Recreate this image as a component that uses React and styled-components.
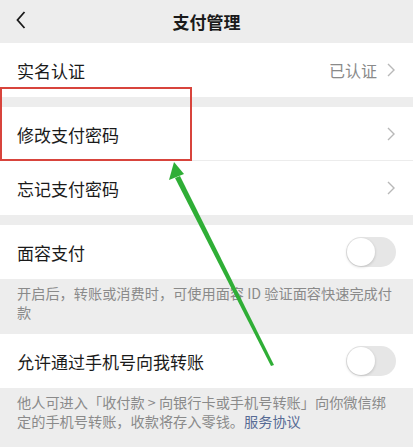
import React from 'react'
import styled, { createGlobalStyle } from 'styled-components'

const Global = createGlobalStyle`
  html, body { margin: 0; padding: 0; background: #ededed; }
  body { font-family: "Noto Sans CJK SC", "Noto Sans", sans-serif; }
`

function Chevron() {
  return (
    <svg width="8" height="14" viewBox="0 0 8 14">
      <path d="M1 1 L7 7 L1 13" fill="none" stroke="#b8b8b8" strokeWidth="1.4" />
    </svg>
  )
}

function App() {
  return (
    <>
      <Global />
      <Page>
        <Header>
          <Back>
            <svg width="10" height="18" viewBox="0 0 10 18">
              <path d="M8.5 1 L1.5 9 L8.5 17" fill="none" stroke="#1a1a1a" strokeWidth="1.8" />
            </svg>
          </Back>
          <Title>支付管理</Title>
        </Header>

        <Group>
          <Row>
            <Label>实名认证</Label>
            <Right><Value>已认证</Value><Chevron /></Right>
          </Row>
        </Group>

        <Group gap>
          <Row divided>
            <Label>修改支付密码</Label>
            <Right><Chevron /></Right>
          </Row>
          <Row>
            <Label>忘记支付密码</Label>
            <Right><Chevron /></Right>
          </Row>
        </Group>

        <Group gap>
          <Row>
            <Label>面容支付</Label>
            <Toggle><Knob /></Toggle>
          </Row>
        </Group>
        <Note>开启后，转账或消费时，可使用面容 ID 验证面容快速完成付<br />款</Note>

        <Group>
          <Row>
            <Label>允许通过手机号向我转账</Label>
            <Toggle><Knob /></Toggle>
          </Row>
        </Group>
        <Note>
          他人可进入「收付款 &gt; 向银行卡或手机号转账」向你微信绑<br />
          定的手机号转账，收款将存入零钱。<Link>服务协议</Link>
        </Note>

        <Highlight />
        <Arrow width="413" height="447" viewBox="0 0 413 447">
          <polygon points="271,366 274,365 180,176 175,178" fill="#2fae36" />
          <polygon points="174,162 169,180 184,174" fill="#2fae36" />
        </Arrow>
      </Page>
    </>
  )
}

export default App

const Page = styled.div`
  position: relative;
  width: 413px;
  height: 447px;
  overflow: hidden;
  background: #ededed;
`

const Header = styled.div`
  height: 43px;
  display: flex;
  align-items: center;
  justify-content: center;
  position: relative;
`

const Back = styled.div`
  position: absolute;
  left: 16px;
  top: 11px;
  display: flex;
`

const Title = styled.div`
  font-size: 17px;
  font-weight: 600;
  color: #1a1a1a;
`

const Group = styled.div`
  background: #fff;
  margin-top: ${p => (p.gap ? '10px' : '0')};
`

const Row = styled.div`
  height: 54px;
  display: flex;
  align-items: center;
  justify-content: space-between;
  padding: 0 17px;
  position: relative;
  &::after {
    content: '';
    display: ${p => (p.divided ? 'block' : 'none')};
    position: absolute;
    left: 17px;
    right: 0;
    bottom: 0;
    height: 1px;
    background: #ececec;
  }
`

const Label = styled.div`
  font-size: 17px;
  color: #1a1a1a;
`

const Right = styled.div`
  display: flex;
  align-items: center;
  gap: 10px;
  padding-right: 1px;
`

const Value = styled.span`
  font-size: 16px;
  color: #8a8a8a;
`

const Toggle = styled.div`
  width: 50px;
  height: 30px;
  border-radius: 15px;
  background: #e6e6e6;
  display: flex;
  align-items: center;
  padding: 0 1px;
  box-sizing: border-box;
`

const Knob = styled.div`
  width: 28px;
  height: 28px;
  border-radius: 50%;
  background: #fff;
  box-shadow: 0 1px 3px rgba(0, 0, 0, 0.18);
`

const Note = styled.div`
  padding: 5px 17px 10px;
  font-size: 14.2px;
  line-height: 19px;
  color: #8a8a8a;
  height: 55px;
  box-sizing: border-box;
  white-space: nowrap;
`

const Link = styled.span`
  color: #576b95;
`

const Highlight = styled.div`
  position: absolute;
  left: 0;
  top: 87px;
  width: 192px;
  height: 74px;
  border: 2px solid #d8443c;
  box-sizing: border-box;
`

const Arrow = styled.svg`
  position: absolute;
  left: 0;
  top: 0;
  pointer-events: none;
`
